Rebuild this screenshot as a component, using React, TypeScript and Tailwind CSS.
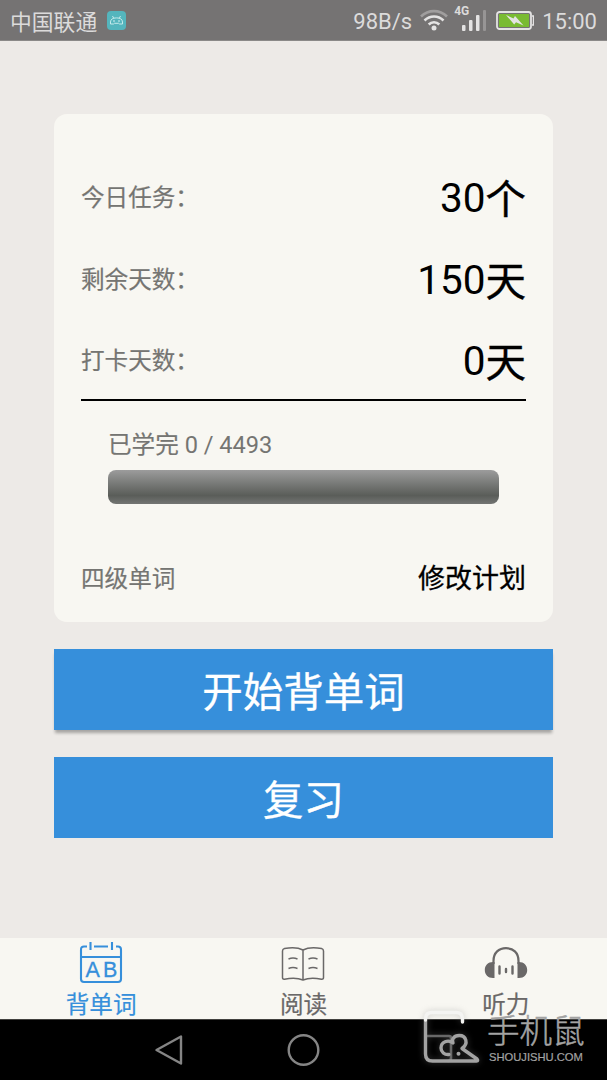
import type { ReactNode } from "react";

function StatusBar() {
  return (
    <header className="flex h-[41px] shrink-0 items-center border-b border-[#8b8988] bg-[#757373] pl-[10px] pr-[10px] text-[22px] leading-none text-[#dcdbdb]">
      <span className="mt-[5px] text-[21.8px]">中国联通</span>
      <svg className="ml-[10px] h-[19px] w-[19px]" viewBox="0 0 19 19" fill="none">
        <rect width="19" height="19" rx="4" fill="#54b5bd" />
        <path
          d="M5.5 5l1.2 2.2M13.5 5l-1.2 2.2M3.5 13v-2C3.7 8.2 5.7 6.9 9.5 6.9s5.8 1.3 6 4.1v2h-3l-.8-.7H7.3l-.8.7z"
          stroke="#c5eaeb"
          strokeWidth="1"
        />
        <circle cx="7" cy="10" r=".8" fill="#e5f5f5" />
        <circle cx="12" cy="10" r=".8" fill="#e5f5f5" />
      </svg>
      <span className="ml-auto mt-[3px]">98B/s</span>
      <svg className="ml-[8px] h-[22px] w-[28px]" viewBox="0 0 28 22" fill="none" strokeWidth="2.6">
        <path d="M1 7.5C8.5.3 19.5.3 27 7.5" stroke="#a09e9e" />
        <path d="M4.5 11.5c5.5-5.3 13.5-5.3 19 0M8.7 15.5c3-3 7.6-3 10.6 0" stroke="#e4e3e3" />
        <circle cx="14" cy="19" r="2.5" fill="#e4e3e3" />
      </svg>
      <div className="ml-[6px] flex h-[28px] w-[33px] flex-col">
        <span className="h-[11px] text-[12px] font-bold leading-[11px]">4G</span>
        <svg className="-mt-[7px] ml-[7px] h-[21px] w-[25px]" viewBox="0 0 25 21" fill="#e4e3e3">
          <rect x="1" y="15" width="3.5" height="6" rx="1" />
          <rect x="8" y="10" width="3.5" height="11" rx="1" />
          <rect x="15" y="5" width="3.5" height="16" rx="1" />
          <rect x="22" y="0" width="3" height="21" rx="1" fill="#979595" />
        </svg>
      </div>
      <svg className="ml-[9px] h-[19px] w-[38px]" viewBox="0 0 38 19" fill="none">
        <rect x="1" y="1" width="34" height="17" rx="2.5" stroke="#e4e3e3" strokeWidth="1.8" />
        <rect x="3" y="3" width="30" height="13" fill="#7abb32" />
        <path d="M36 5h1.5v9H36" stroke="#e4e3e3" strokeWidth="1.5" />
        <path d="M10 4l7.5 3.5L19 5l8.5 9.5-7.5-3.3-1.8 2.3z" fill="#e4e3e3" />
      </svg>
      <span className="ml-[8px] mt-[3px]">15:00</span>
    </header>
  );
}

function StatRow({ label, value, unit }: { label: string; value: string; unit: string }) {
  return (
    <div className="flex h-[81.5px] items-center justify-between pt-[6px]">
      <span className="mt-[2px] text-[23.6px] leading-none text-[#757572] [-webkit-text-stroke:0.2px]">{label}</span>
      <span className="flex text-[40.5px] leading-none text-black">
        {value}
        <span className="mt-[2px] -mb-[2px] [-webkit-text-stroke:0.4px]">{unit}</span>
      </span>
    </div>
  );
}

function Tab({ label, active, children }: { label: string; active?: boolean; children: ReactNode }) {
  return (
    <button className={active ? "flex flex-1 flex-col items-center text-[#368fdb]" : "flex flex-1 flex-col items-center text-[#6a6868]"}>
      <span className="flex h-[54px] items-start">{children}</span>
      <span className="text-[23.6px] leading-[28px] [-webkit-text-stroke:0.2px]">{label}</span>
    </button>
  );
}

function Watermark() {
  return (
    <div className="absolute left-[418px] top-[1004px] flex text-[#a3a3a3]">
      <svg
        className="h-[66px] w-[69px] drop-shadow-[0_0_3px_#88888866]"
        viewBox="0 0 69 66"
        fill="none"
        strokeWidth="3.4"
        strokeLinecap="round"
        strokeLinejoin="round"
      >
        <path d="M7.5 32H31q2 0 2 2v20q0 3-3 3" stroke="#686868" strokeWidth="2.6" />
        <path d="M7.5 16V50q0 7 7 7H58.5q2 0 .5-2L44 44.5c7-5 4-13-2.7-13-5.8 0-7.8 4-6.3 7.5-5-4-12-1-12 5 0 4 3.5 7 8 6.5" stroke="#a3a3a3" />
        <path d="M7.5 16V15q0-6.5 6.5-6.5H38q6.5 0 6.5 6.5v3" stroke="#f4f4f2" />
        <circle cx="40.5" cy="49.7" r="2" fill="#a3a3a3" />
      </svg>
      <div className="flex flex-col">
        <span className="mt-[10px] text-[32.6px] font-light leading-[36px] [-webkit-text-stroke:0.5px]">手机鼠</span>
        <span className="pl-[2px] font-['Liberation_Sans'] text-[11.2px] leading-[14px] [-webkit-text-stroke:0.2px]">SHOUJISHU.COM</span>
      </div>
    </div>
  );
}

export default function App() {
  return (
    <div className="relative flex h-[1080px] w-[607px] flex-col overflow-hidden bg-[#edeae7] font-[Roboto,'Noto_Sans_CJK_SC',sans-serif]">
      <StatusBar />
      <main className="flex flex-1 flex-col px-[54px] pt-[73px]">
        <section className="h-[507.5px] rounded-[13px] bg-[#f8f7f2] px-[27px] pt-[40.5px]">
          <StatRow label="今日任务：" value="30" unit="个" />
          <StatRow label="剩余天数：" value="150" unit="天" />
          <StatRow label="打卡天数：" value="0" unit="天" />
          <div className="h-[2px] bg-black" />
          <div className="mt-[30px] px-[27px]">
            <p className="text-[23.6px] leading-[28px] text-[#757572]">
              <span className="[-webkit-text-stroke:0.2px]">已学完</span> 0 / 4493
            </p>
            <div className="mt-[11px] h-[33.5px] rounded-[8px] bg-linear-to-b from-[#9c9c9c] via-[#5a5d59] via-75% to-[#737573]" />
          </div>
          <div className="mt-[56px] flex h-[40px] items-center justify-between">
            <span className="text-[23.6px] leading-none text-[#757572] [-webkit-text-stroke:0.2px]">四级单词</span>
            <span className="text-[27px] leading-none text-black [-webkit-text-stroke:0.3px]">修改计划</span>
          </div>
        </section>
        <button className="mt-[27px] h-[81px] bg-[#368fdb] pt-[8px] text-[40.5px] leading-none text-white shadow-[0_4px_3px_-1px_rgba(0,0,0,0.3)] [-webkit-text-stroke:0.3px]">开始背单词</button>
        <button className="mt-[27px] h-[81px] bg-[#368fdb] pt-[8px] text-[40.5px] leading-none text-white [-webkit-text-stroke:0.3px]">复习</button>
      </main>
      <nav className="flex h-[81px] shrink-0 bg-[#f8f7f2]">
        <Tab label="背单词" active>
          <svg className="mt-[4px] h-[42px] w-[44px]" viewBox="0 0 44 42" fill="none" stroke="currentColor" strokeWidth="2.1">
            <path d="M8 4.5H5Q2 4.5 2 7.5V37q0 3 3 3h34q3 0 3-3V7.5q0-3-3-3h-2M15 4.5h14M2 15h40M11.5 0v8M33 0v8" />
            <text x="6.5" y="35" fill="currentColor" strokeWidth=".3" className="font-['Liberation_Sans'] text-[21.5px]">A</text>
            <text x="24" y="35" fill="currentColor" strokeWidth=".3" className="font-['Liberation_Sans'] text-[21.5px]">B</text>
          </svg>
        </Tab>
        <Tab label="阅读">
          <svg className="mt-[8px] h-[36px] w-[44px]" viewBox="0 0 44 36" fill="none" stroke="currentColor" strokeWidth="1.5">
            <path d="M22 4C17 1.3 10 1.3 3.5 2.5Q1.5 3 1.5 5v26.5q0 2 2 1.7C10 32 17 32 22 34c5-2 12-2 18.5-.8q2 .3 2-1.7V5q0-2-2-2.5C34 1.3 27 1.3 22 4v30M7.5 13c3-1.2 6-1.2 9 0M7.5 22.5c3-1.2 6-1.2 9 0M27.5 13c3-1.2 6-1.2 9 0M27.5 22.5c3-1.2 6-1.2 9 0" />
          </svg>
        </Tab>
        <Tab label="听力">
          <svg className="mt-[8px] h-[34px] w-[44px]" viewBox="0 0 44 34" fill="none" stroke="currentColor" strokeWidth="2.2">
            <path d="M9.5 18v-3C9.5 6.5 15 2.2 22 2.2S34.5 6.5 34.5 15v3" />
            <path d="M10.5 16v16H9C4 32 .8 28.5.8 24S4 16 9 16zM33.5 16v16H35c5 0 8.2-3.5 8.2-8s-3.2-8-8.2-8z" fill="currentColor" stroke="none" />
            <path d="M15.5 20.5v7M28.5 20.5v7M22 23v3" strokeWidth="2.4" strokeLinecap="round" />
          </svg>
        </Tab>
      </nav>
      <footer className="flex h-[61px] shrink-0 items-center border-t border-[#42413f] bg-black">
        <svg className="ml-[154px] h-[34px] w-[30px]" viewBox="0 0 30 34" fill="none" stroke="#858585" strokeWidth="2.4" strokeLinejoin="round">
          <path d="M27 3.5v27L2.5 17z" />
        </svg>
        <svg className="ml-[103px] h-[34px] w-[34px]" viewBox="0 0 34 34" fill="none" stroke="#858585" strokeWidth="2.4">
          <circle cx="16.5" cy="17" r="14.8" />
        </svg>
      </footer>
      <Watermark />
    </div>
  );
}
